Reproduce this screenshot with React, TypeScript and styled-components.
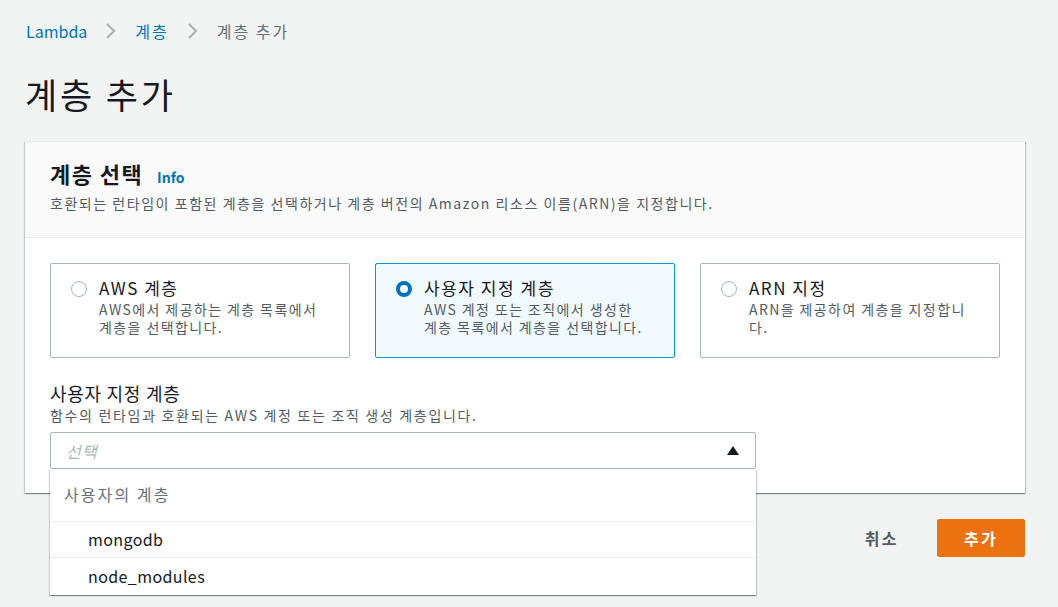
import React from "react";
import styled, { createGlobalStyle } from "styled-components";

const Global = createGlobalStyle`
  html, body { margin: 0; padding: 0; background: #f2f3f3; }
  body { font-family: "Noto Sans CJK KR", "Noto Sans", sans-serif; color: #16191f; }
  * { box-sizing: border-box; }
`;

const Page = styled.div`
  width: 1058px;
  height: 607px;
  padding: 18px 0 0 25px;
  overflow: hidden;
`;

const Crumbs = styled.nav`
  display: flex;
  align-items: center;
  gap: 18px;
  height: 26px;
  font-size: 16px;
  padding-left: 1px;
`;

const Crumb = styled.span<{ $link?: boolean; $spaced?: boolean }>`
  color: ${(p) => (p.$link ? "#0073bb" : "#687078")};
  letter-spacing: ${(p) => (p.$spaced ? "2px" : "0")};
`;

const Title = styled.h1`
  margin: 28px 0 0;
  font-size: 35px;
  font-weight: 400;
  line-height: 44px;
  letter-spacing: 0.08em;
  color: #16191f;
`;

const Card = styled.section`
  margin-top: 25px;
  width: 1000px;
  background: #fff;
  box-shadow: 0 1px 1px 0 rgba(0, 28, 36, 0.3), 1px 1px 1px 0 rgba(0, 28, 36, 0.15),
    -1px 1px 1px 0 rgba(0, 28, 36, 0.15);
  border-top: 1px solid #eaeded;
`;

const CardHeader = styled.header`
  background: #fafafa;
  border-bottom: 1px solid #eaeded;
  padding: 17px 25px 24px;
`;

const HeaderTitle = styled.h2`
  margin: 0;
  font-size: 22px;
  font-weight: 700;
  line-height: 28px;
  height: 28px;
  letter-spacing: 0.065em;
`;

const Info = styled.span`
  margin-left: 14px;
  font-size: 14px;
  font-weight: 700;
  line-height: 1;
  letter-spacing: 0;
  color: #0073bb;
`;

const Desc = styled.p<{ $gap?: number; $spacing?: string }>`
  margin: ${(p) => p.$gap ?? 0}px 0 0;
  font-size: 14px;
  line-height: 20px;
  letter-spacing: ${(p) => p.$spacing ?? "0.11em"};
  color: #545b64;
`;

const CardBody = styled.div`
  padding: 25px 25px 24px;
`;

const Tiles = styled.div`
  display: grid;
  grid-template-columns: repeat(3, 300px);
  gap: 25px;
`;

const Tile = styled.div<{ $selected?: boolean }>`
  display: flex;
  gap: 12px;
  height: 95px;
  padding: 12px 20px 0 20px;
  border: 1px solid ${(p) => (p.$selected ? "#00a1c9" : "#aab7b8")};
  background: ${(p) => (p.$selected ? "#f1faff" : "#fff")};
  border-radius: 2px;
`;

const Radio = styled.span<{ $checked?: boolean }>`
  flex: none;
  width: 16px;
  height: 16px;
  margin-top: 5px;
  border-radius: 50%;
  border: ${(p) => (p.$checked ? "4px solid #0073bb" : "1px solid #aab7b8")};
  background: #fff;
`;

const TileText = styled.div`
  display: flex;
  flex-direction: column;
`;

const TileLabel = styled.div`
  font-size: 17px;
  line-height: 24px;
  letter-spacing: 0.09em;
  color: #16191f;
`;

const TileDesc = styled.div`
  font-size: 14px;
  line-height: 18px;
  letter-spacing: 0.1em;
  color: #545b64;
`;

const Field = styled.div`
  margin-top: 23px;
  width: 706px;
`;

const FieldLabel = styled.div`
  font-size: 18px;
  line-height: 24px;
  letter-spacing: 0.04em;
`;

const SelectWrap = styled.div`
  position: relative;
  margin-top: 7px;
`;

const Select = styled.div`
  height: 37px;
  border: 1px solid #aab7b8;
  border-radius: 2px;
  display: flex;
  align-items: center;
  justify-content: space-between;
  padding: 0 15px 0 15px;
  font-size: 16px;
  font-style: italic;
  letter-spacing: 0.08em;
  color: #aab7b8;
`;

const Caret = styled.span`
  width: 0;
  height: 0;
  border-left: 6px solid transparent;
  border-right: 6px solid transparent;
  border-bottom: 9px solid #16191f;
  margin-right: 1px;
`;

const Menu = styled.ul`
  position: absolute;
  left: 0;
  right: 0;
  top: 100%;
  margin: 0;
  padding: 0;
  list-style: none;
  background: #fff;
  box-shadow: 0 1px 1px 0 rgba(0, 28, 36, 0.3), 1px 1px 1px 0 rgba(0, 28, 36, 0.15),
    -1px 1px 1px 0 rgba(0, 28, 36, 0.15);
  z-index: 2;
`;

const MenuGroup = styled.li`
  height: 53px;
  padding: 0 14px 3px;
  display: flex;
  align-items: center;
  font-size: 16px;
  letter-spacing: 0.13em;
  color: #687078;
  border-bottom: 1px solid #eaeded;
`;

const MenuItem = styled.li<{ $last?: boolean }>`
  height: ${(p) => (p.$last ? 37 : 36)}px;
  padding: 0 38px 2px;
  display: flex;
  align-items: center;
  font-size: 16px;
  letter-spacing: 0.4px;
  color: #16191f;
  border-bottom: ${(p) => (p.$last ? "none" : "1px solid #eaeded")};
`;

const Actions = styled.div`
  width: 1000px;
  display: flex;
  justify-content: flex-end;
  align-items: center;
  gap: 38px;
  margin-top: 26px;
`;

const TextButton = styled.button`
  border: none;
  background: none;
  padding: 0;
  font: inherit;
  font-size: 16px;
  font-weight: 700;
  letter-spacing: 0.15em;
  color: #545b64;
`;

const PrimaryButton = styled.button`
  border: 1px solid #ec7211;
  background: #ec7211;
  color: #fff;
  font: inherit;
  font-size: 16px;
  font-weight: 700;
  letter-spacing: 0.15em;
  width: 88px;
  height: 38px;
  border-radius: 2px;
`;

const Chevron = () => (
  <svg width="12" height="18" viewBox="0 0 12 18" aria-hidden>
    <path d="M2 2l7 7-7 7" fill="none" stroke="#aab7b8" strokeWidth="2.4" />
  </svg>
);

export default function App() {
  return (
    <>
      <Global />
      <Page>
        <Crumbs>
          <Crumb $link>Lambda</Crumb>
          <Chevron />
          <Crumb $link $spaced>
            계층
          </Crumb>
          <Chevron />
          <Crumb $spaced>계층 추가</Crumb>
        </Crumbs>
        <Title>계층 추가</Title>
        <Card>
          <CardHeader>
            <HeaderTitle>
              계층 선택<Info>Info</Info>
            </HeaderTitle>
            <Desc $gap={6}>
              호환되는 런타임이 포함된 계층을 선택하거나 계층 버전의 Amazon 리소스 이름(ARN)을 지정합니다.
            </Desc>
          </CardHeader>
          <CardBody>
            <Tiles>
              <Tile>
                <Radio />
                <TileText>
                  <TileLabel>AWS 계층</TileLabel>
                  <TileDesc>
                    AWS에서 제공하는 계층 목록에서
                    <br />
                    계층을 선택합니다.
                  </TileDesc>
                </TileText>
              </Tile>
              <Tile $selected>
                <Radio $checked />
                <TileText>
                  <TileLabel>사용자 지정 계층</TileLabel>
                  <TileDesc>
                    AWS 계정 또는 조직에서 생성한
                    <br />
                    계층 목록에서 계층을 선택합니다.
                  </TileDesc>
                </TileText>
              </Tile>
              <Tile>
                <Radio />
                <TileText>
                  <TileLabel>ARN 지정</TileLabel>
                  <TileDesc>
                    ARN을 제공하여 계층을 지정합니
                    <br />
                    다.
                  </TileDesc>
                </TileText>
              </Tile>
            </Tiles>
            <Field>
              <FieldLabel>사용자 지정 계층</FieldLabel>
              <Desc $spacing="0.12em">함수의 런타임과 호환되는 AWS 계정 또는 조직 생성 계층입니다.</Desc>
              <SelectWrap>
                <Select>
                  선택
                  <Caret />
                </Select>
                <Menu>
                  <MenuGroup>사용자의 계층</MenuGroup>
                  <MenuItem>mongodb</MenuItem>
                  <MenuItem $last>node_modules</MenuItem>
                </Menu>
              </SelectWrap>
            </Field>
          </CardBody>
        </Card>
        <Actions>
          <TextButton>취소</TextButton>
          <PrimaryButton>추가</PrimaryButton>
        </Actions>
      </Page>
    </>
  );
}
